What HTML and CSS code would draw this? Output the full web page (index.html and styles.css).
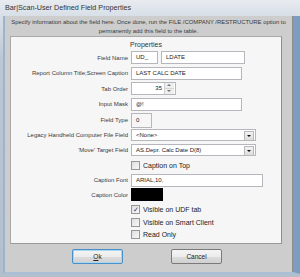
FILE: index.html
```html
<!DOCTYPE html>
<html>
<head>
<meta charset="utf-8">
<link rel="stylesheet" href="styles.css">
</head>
<body>
<div class="window">
  <div class="titlebar">Bar|Scan-User Defined Field Properties</div>
  <div class="frame">
    <div class="client">
      <div class="desc">Specify information about the field here. Once done, run the FILE /COMPANY /RESTRUCTURE option to<br>permanently add this field to the table.</div>
      <div class="panel">
        <div class="panel-title">Properties</div>
        <div class="row r15"><span class="lbl">Field Name</span><span class="box w27">UD_</span><span class="box w84 ml3">LDATE</span></div>
        <div class="row r16"><span class="lbl">Report Column Title;Screen Caption</span><span class="box w111">LAST CALC DATE</span></div>
        <div class="row r15"><span class="lbl">Tab Order</span><span class="box w45 num">35<span class="spin"><i class="up"></i><i class="dn"></i></span></span></div>
        <div class="row r16"><span class="lbl">Input Mask</span><span class="box w111">@!</span></div>
        <div class="row r16"><span class="lbl">Field Type</span><span class="box w20 dis">0</span></div>
        <div class="row r14"><span class="lbl">Legacy Handheld Computer File Field</span><span class="box w125 combo">&lt;None&gt;<span class="drop"><i></i></span></span></div>
        <div class="row r15"><span class="lbl">'Move' Target Field</span><span class="box w125 combo">AS.Depr. Calc Date D(8)<span class="drop"><i></i></span></span></div>
        <div class="row r16"><span class="lbl"></span><span class="chk"></span><span class="ctext">Caption on Top</span></div>
        <div class="row r14"><span class="lbl">Caption Font</span><span class="box w132">ARIAL,10,</span></div>
        <div class="row r15"><span class="lbl">Caption Color</span><span class="swatch"></span></div>
        <div class="row r14"><span class="lbl"></span><span class="chk on">&#10003;</span><span class="ctext">Visible on UDF tab</span></div>
        <div class="row r12"><span class="lbl"></span><span class="chk"></span><span class="ctext">Visible on Smart Client</span></div>
        <div class="row r12"><span class="lbl"></span><span class="chk"></span><span class="ctext">Read Only</span></div>
      </div>
      <div class="buttons">
        <button class="btn default"><u>O</u>k</button>
        <button class="btn">Cancel</button>
      </div>
    </div>
  </div>
</div>
</body>
</html>
```
FILE: styles.css
```css
html, body {
  margin: 0;
  padding: 0;
}
body {
  width: 300px;
  height: 277px;
  overflow: hidden;
  background: #b9c6d4;
  font-family: "Liberation Sans", Arial, sans-serif;
  color: #222;
}
.window {
  display: flex;
  flex-direction: column;
  height: 277px;
  background: linear-gradient(to bottom, #e8ebf0 0px, #d8dfe7 16px, #bcc7d4 60px, #b2bfcd 100%);
}
.titlebar {
  height: 16px;
  line-height: 16px;
  padding-left: 5px;
  font-size: 7.2px;
  color: #333;
}
.frame {
  flex: 1;
  display: flex;
  margin: 0 0 3px 3px;
  border-left: 2px solid #9fb4cc;
  border-bottom: 2px solid #a9bfd6;
  border-right: 7px solid #7e9cc0;
}
.client {
  flex: 1;
  background: #cdcdcd;
  display: flex;
  flex-direction: column;
  border-right: 1px solid #8c8c8c;
}
.desc {
  padding-top: 2px;
  text-align: center;
  font-size: 5.9px;
  line-height: 9px;
  color: #3a3a3a;
  white-space: nowrap;
}
.panel {
  margin-left: 5px;
  width: 270px;
  height: 206px;
  background: #f6f6f6;
  border: 1px solid #a9a9a9;
  border-right-color: #8e8e8e;
  border-bottom-color: #9a9a9a;
  display: flex;
  flex-direction: column;
}
.panel-title {
  height: 13px;
  line-height: 15px;
  text-align: center;
  font-size: 7px;
  color: #333;
}
.row {
  display: flex;
  align-items: center;
  font-size: 6px;
}
.r12 { height: 12px; }
.r14 { height: 14px; }
.r15 { height: 15px; }
.r16 { height: 16px; }
.lbl {
  width: 117px;
  margin-right: 3px;
  text-align: right;
  color: #3a3a3a;
  white-space: nowrap;
}
.box {
  position: relative;
  box-sizing: border-box;
  height: 13px;
  line-height: 11px;
  background: #fff;
  border: 1px solid #b5b7bc;
  padding-left: 4px;
  font-size: 6px;
  color: #222;
  white-space: nowrap;
}
.w20 { width: 21px; }
.w27 { width: 27px; }
.w45 { width: 45px; }
.w84 { width: 84px; }
.w111 { width: 111px; }
.w125 { width: 125px; }
.w132 { width: 132px; }
.ml3 { margin-left: 3px; }
.dis {
  background: #f6f6f6;
  height: 15px;
  line-height: 13px;
}
.num {
  text-align: right;
  padding-right: 13px;
}
.spin {
  position: absolute;
  right: 1px;
  top: 0;
  width: 9px;
  height: 11px;
  display: flex;
  flex-direction: column;
  border-left: 1px solid #d0d0d0;
}
.spin i {
  flex: 1;
  position: relative;
  background: #eeeeee;
}
.spin i.up { border-bottom: 1px solid #d6d6d6; }
.spin i::after {
  content: "";
  position: absolute;
  left: 2px;
  top: 1px;
  border-left: 2px solid transparent;
  border-right: 2px solid transparent;
}
.spin i.up::after { border-bottom: 2px solid #777; }
.spin i.dn::after { border-top: 2px solid #777; }
.combo {
  height: 12px;
  line-height: 10px;
}
.drop {
  position: absolute;
  right: 1px;
  top: 1px;
  width: 8px;
  height: 8px;
  background: linear-gradient(#f2f2f2, #dcdcdc);
  border: 1px solid #b8b8b8;
}
.drop i {
  position: absolute;
  left: 2px;
  top: 3px;
  border-left: 2px solid transparent;
  border-right: 2px solid transparent;
  border-top: 2px solid #111;
}
.chk {
  box-sizing: border-box;
  width: 9px;
  height: 9px;
  background: linear-gradient(135deg, #dedede, #f8f8f8);
  border: 1px solid #979797;
  font-size: 7px;
  line-height: 7px;
  text-align: center;
  color: #2a3b70;
  overflow: hidden;
}
.ctext {
  margin-left: 3px;
  font-size: 7px;
  color: #222;
}
.swatch {
  width: 32px;
  height: 13px;
  background: #000;
}
.buttons {
  display: flex;
  gap: 48px;
  padding-left: 67px;
  margin-top: 5px;
}
.btn {
  box-sizing: border-box;
  width: 51px;
  height: 15px;
  padding: 0;
  font-family: "Liberation Sans", Arial, sans-serif;
  font-size: 6.5px;
  color: #222;
  background: linear-gradient(#f4f4f4 0%, #ececec 50%, #dddddd 51%, #d0d0d0 100%);
  border: 1px solid #7a7a7a;
  border-radius: 2px;
}
.btn.default {
  border-color: #4a8fc8;
  box-shadow: inset 0 0 0 1px #a8d8f0;
}
```
